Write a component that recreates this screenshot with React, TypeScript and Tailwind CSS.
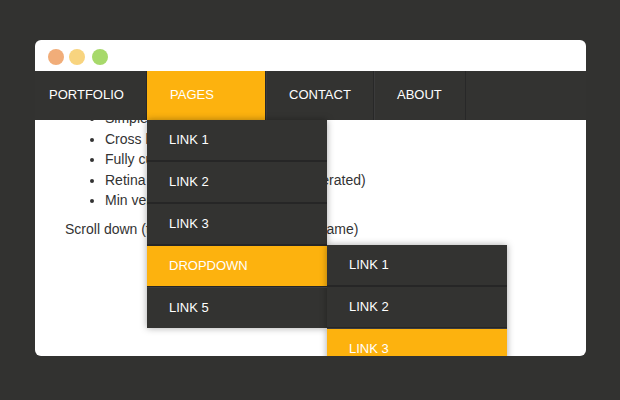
import React from 'react';

// Demo window with a flat dark navbar, an open dropdown and an open submenu.
const YELLOW = 'bg-[#fdb20e]';

const SUB = ['LINK 1', 'LINK 2', 'LINK 3'];

function MenuItem({
  label,
  first,
  last,
  active,
  children,
}: {
  label: string;
  first?: boolean;
  last?: boolean;
  active?: boolean;
  children?: React.ReactNode;
}) {
  return (
    <li
      className={
        'relative ' +
        (first ? '' : 'border-t border-[#3c3c3c] ') +
        (last ? '' : 'border-b border-[#262626] ')
      }
    >
      <div
        className={
          'flex h-[40px] items-center pl-[22px] text-[13px] text-white ' + (active ? YELLOW : '')
        }
      >
        {label}
      </div>
      {children}
    </li>
  );
}

export default function App() {
  return (
    <div
      className="h-[400px] w-[620px] bg-[#323230] pt-[40px] pl-[35px]"
      style={{ fontFamily: '"Liberation Sans", Arial, sans-serif' }}
    >
      <div className="flex h-[316px] w-[551px] flex-col overflow-hidden rounded-[6px] bg-white">
        {/* title bar with traffic lights */}
        <div className="flex h-[31px] shrink-0 pt-[9px]">
          <span className="ml-[13px] h-4 w-4 rounded-full bg-[#f1ad79]" />
          <span className="ml-[5px] h-4 w-4 rounded-full bg-[#f8d47f]" />
          <span className="ml-[7px] h-4 w-4 rounded-full bg-[#a7d96b]" />
        </div>

        {/* navbar */}
        <ul className="relative z-10 flex h-[49px] shrink-0 bg-[#333331] text-[13px] text-white">
          <li className="flex w-[112px] items-center border-r border-[#282828] pb-px pl-[14px]">PORTFOLIO</li>
          <li className={'relative flex w-[119px] items-center border-x border-l-[#fdb20e] border-r-[#282828] pb-px pl-[22px] ' + YELLOW}>
            PAGES
            <ul className="absolute top-full left-[-1px] w-[180px] bg-[#333331] shadow-[0_0_7px_rgba(0,0,0,0.35)]">
              <MenuItem label="LINK 1" first />
              <MenuItem label="LINK 2" />
              <MenuItem label="LINK 3" />
              <MenuItem label="DROPDOWN" active>
                <ul className="absolute top-[-1px] left-full w-[180px] bg-[#333331] shadow-[0_0_7px_rgba(0,0,0,0.35)]">
                  {SUB.map((s, i) => (
                    <MenuItem key={s} label={s} first={i === 0} last={i === SUB.length - 1} active={i === 2} />
                  ))}
                </ul>
              </MenuItem>
              <MenuItem label="LINK 5" last />
            </ul>
          </li>
          <li className="flex w-[108px] items-center border-x border-l-[#3b3b3b] border-r-[#282828] pb-px pl-[22px]">CONTACT</li>
          <li className="flex w-[92px] items-center border-x border-l-[#3b3b3b] border-r-[#282828] pb-px pl-[22px]">ABOUT</li>
        </ul>

        {/* page content behind the menus */}
        <div className="flex-1 overflow-hidden pl-[30px] text-[14px] leading-[20.5px] text-[#333]">
          <ul className="-mt-[12px] list-disc pl-[40px]">
            <li>Simple and clean</li>
            <li>Cross browser</li>
            <li>Fully customizable</li>
            <li>Retina ready (no images, CSS generated)</li>
            <li>Min version included</li>
          </ul>
          <p className="mt-[8.5px]">Scroll down (to see it working inside the iframe)</p>
        </div>
      </div>
    </div>
  );
}
